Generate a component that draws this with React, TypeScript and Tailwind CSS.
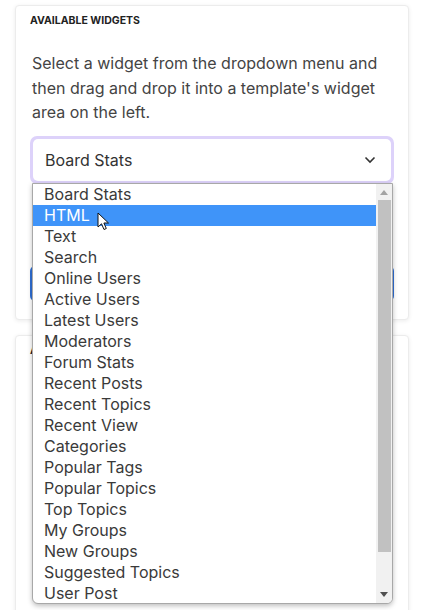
import React from "react";

const widgets = [
  "Board Stats",
  "HTML",
  "Text",
  "Search",
  "Online Users",
  "Active Users",
  "Latest Users",
  "Moderators",
  "Forum Stats",
  "Recent Posts",
  "Recent Topics",
  "Recent View",
  "Categories",
  "Popular Tags",
  "Popular Topics",
  "Top Topics",
  "My Groups",
  "New Groups",
  "Suggested Topics",
  "User Post",
];

const Cursor = () => (
  <svg width="14" height="20" viewBox="0 0 14 20" className="absolute left-[97px] top-[212px]">
    <path
      d="M1 1 L1 15 L4.5 11.8 L7 17.5 L9.3 16.5 L6.9 11 L11.5 11 Z"
      fill="#fff"
      stroke="#111"
      strokeWidth="1"
      strokeLinejoin="round"
    />
  </svg>
);

const App = () => {
  return (
    <div
      className="relative h-[610px] w-[425px] overflow-hidden bg-white pt-[5px]"
      style={{ fontFamily: "Inter, 'Noto Sans', sans-serif" }}
    >
      {/* Available widgets card */}
      <div className="ml-[15px] w-[394px] rounded-[4px] border border-[#ececec] bg-white px-[14px] pb-[18px] shadow-[0_1px_4px_rgba(0,0,0,0.08)]">
        <h3 className="pt-[8px] text-[10.5px] font-bold uppercase leading-[14px] text-[#222]">
          Available widgets
        </h3>
        <p className="mt-[23px] pl-[2px] text-[16px] leading-[24.5px] text-[#444]">
          Select a widget from the dropdown menu and then drag and drop it into a template's widget
          area on the left.
        </p>
        <div className="mt-[11px] rounded-[7px] bg-[#ddd2fa] p-[3px]">
          <div className="flex h-[42px] items-center justify-between rounded-[5px] bg-white pl-[12px] pr-[15px] text-[16px] text-[#333]">
            <span>Board Stats</span>
            <svg width="12" height="8" viewBox="0 0 12 8">
              <path d="M1.5 1.5 L6 6 L10.5 1.5" fill="none" stroke="#333" strokeWidth="1.6" />
            </svg>
          </div>
        </div>
        <div className="mt-[82px] h-[35px] rounded-[5px] bg-[#2f6fd6]" />
      </div>

      {/* Second card */}
      <div className="ml-[15px] mt-[15px] h-[300px] w-[394px] rounded-[4px] border border-[#ececec] bg-white px-[14px] shadow-[0_1px_4px_rgba(0,0,0,0.08)]">
        <h3 className="pt-[8px] text-[10.5px] font-bold uppercase leading-[14px] text-[#222]">
          Available templates
        </h3>
      </div>

      {/* Open dropdown list */}
      <div className="absolute left-[32px] top-[183px] flex h-[421px] w-[361px] overflow-hidden rounded-b-[6px] border border-[#a8a8a8] bg-white shadow-[0_2px_5px_rgba(0,0,0,0.25)]">
        <ul className="flex-1">
          {widgets.map((w, i) => (
            <li
              key={w}
              className={
                i === 1
                  ? "h-[21px] bg-[#3f94f9] pl-[11px] text-[16px] leading-[21px] text-white"
                  : "h-[21px] pl-[11px] text-[16px] leading-[21px] text-[#3a3a3a]"
              }
            >
              {w}
            </li>
          ))}
        </ul>
        <div className="flex w-[16px] flex-col items-center bg-[#f1f1f1]">
          <div className="flex h-[16px] items-center justify-center">
            <svg width="8" height="5" viewBox="0 0 8 5">
              <path d="M0 5 L4 0 L8 5 Z" fill="#a3a3a3" />
            </svg>
          </div>
          <div className="h-[352px] w-[13px] bg-[#c1c1c1]" />
          <div className="flex-1" />
          <div className="flex h-[18px] items-center justify-center">
            <svg width="8" height="5" viewBox="0 0 8 5">
              <path d="M0 0 L8 0 L4 5 Z" fill="#505050" />
            </svg>
          </div>
        </div>
      </div>

      <Cursor />
    </div>
  );
};

export default App;
